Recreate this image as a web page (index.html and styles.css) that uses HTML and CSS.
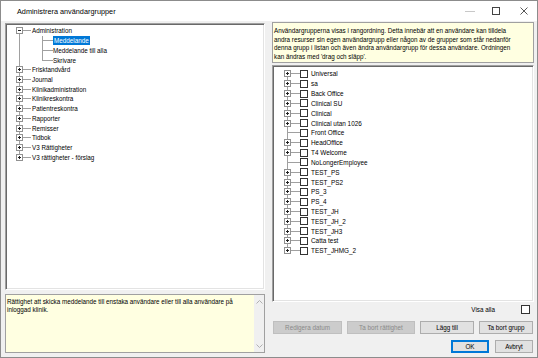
FILE: index.html
```html
<!DOCTYPE html>
<html lang="sv">
<head>
  <meta charset="UTF-8">
  <title>Administrera användargrupper</title>
  <link rel="stylesheet" href="styles.css">
</head>
<body>

  <div class="window">

    <div class="titlebar">
      <span class="title">Administrera användargrupper</span>
      <div class="controls">
        <svg width="10" height="10" viewBox="0 0 10 10"><path d="M0 5.5h10" stroke="#c8c8c8" stroke-width="1"/></svg>
        <svg width="8" height="8" viewBox="0 0 8 8"><rect x="0.5" y="0.5" width="7" height="7" fill="none" stroke="#444"/></svg>
        <svg width="8" height="8" viewBox="0 0 8 8"><path d="M0.5 0.5l7 7M7.5 0.5l-7 7" stroke="#444" stroke-width="0.9"/></svg>
      </div>
    </div>

    <div class="main">

      <div class="col">
        <div class="tree sunken">
          <div class="row first"><span class="gut"><span class="exp minus"></span></span>Administration</div>
          <div class="row kid"><span class="gut"></span><span class="sel">Meddelande</span></div>
          <div class="row kid"><span class="gut"></span>Meddelande till alla</div>
          <div class="row kid lastkid"><span class="gut"></span>Skrivare</div>
          <div class="row"><span class="gut"><span class="exp"></span></span>Frisktandvård</div>
          <div class="row"><span class="gut"><span class="exp"></span></span>Journal</div>
          <div class="row"><span class="gut"><span class="exp"></span></span>Klinikadministration</div>
          <div class="row"><span class="gut"><span class="exp"></span></span>Klinikreskontra</div>
          <div class="row"><span class="gut"><span class="exp"></span></span>Patientreskontra</div>
          <div class="row"><span class="gut"><span class="exp"></span></span>Rapporter</div>
          <div class="row"><span class="gut"><span class="exp"></span></span>Remisser</div>
          <div class="row"><span class="gut"><span class="exp"></span></span>Tidbok</div>
          <div class="row"><span class="gut"><span class="exp"></span></span>V3 Rättigheter</div>
          <div class="row last"><span class="gut"><span class="exp"></span></span>V3 rättigheter - förslag</div>
        </div>

        <div class="desc">
          <div class="desc-text">Rättighet att skicka meddelande till enstaka användare eller till alla användare på<br>inloggad klinik.</div>
          <div class="scroll">
            <svg width="7" height="4" viewBox="0 0 7 4"><path d="M0.5 3.5l3-3 3 3" fill="none" stroke="#b0b0b0"/></svg>
            <svg width="7" height="4" viewBox="0 0 7 4"><path d="M0.5 0.5l3 3 3-3" fill="none" stroke="#b0b0b0"/></svg>
          </div>
        </div>
      </div>

      <div class="col">
        <div class="info">Användargrupperna visas i rangordning. Detta innebär att en användare kan tilldela<br>andra resurser sin egen användargrupp eller någon av de grupper som står nedanför<br>denna grupp i listan och även ändra användargrupp för dessa användare. Ordningen<br>kan ändras med 'drag och släpp'.</div>

        <div class="tree groups sunken">
          <div class="row first"><span class="gut"><span class="exp"></span></span><span class="chk"></span>Universal</div>
          <div class="row"><span class="gut"><span class="exp"></span></span><span class="chk"></span>sa</div>
          <div class="row"><span class="gut"><span class="exp"></span></span><span class="chk"></span>Back Office</div>
          <div class="row"><span class="gut"><span class="exp"></span></span><span class="chk"></span>Clinical SU</div>
          <div class="row"><span class="gut"><span class="exp"></span></span><span class="chk"></span>Clinical</div>
          <div class="row"><span class="gut"><span class="exp"></span></span><span class="chk"></span>Clinical utan 1026</div>
          <div class="row"><span class="gut"></span><span class="chk"></span>Front Office</div>
          <div class="row"><span class="gut"><span class="exp"></span></span><span class="chk"></span>HeadOffice</div>
          <div class="row"><span class="gut"><span class="exp"></span></span><span class="chk"></span>T4 Welcome</div>
          <div class="row"><span class="gut"></span><span class="chk"></span>NoLongerEmployee</div>
          <div class="row"><span class="gut"><span class="exp"></span></span><span class="chk"></span>TEST_PS</div>
          <div class="row"><span class="gut"><span class="exp"></span></span><span class="chk"></span>TEST_PS2</div>
          <div class="row"><span class="gut"><span class="exp"></span></span><span class="chk"></span>PS_3</div>
          <div class="row"><span class="gut"><span class="exp"></span></span><span class="chk"></span>PS_4</div>
          <div class="row"><span class="gut"><span class="exp"></span></span><span class="chk"></span>TEST_JH</div>
          <div class="row"><span class="gut"><span class="exp"></span></span><span class="chk"></span>TEST_JH_2</div>
          <div class="row"><span class="gut"><span class="exp"></span></span><span class="chk"></span>TEST_JH3</div>
          <div class="row"><span class="gut"><span class="exp"></span></span><span class="chk"></span>Catta test</div>
          <div class="row last"><span class="gut"><span class="exp"></span></span><span class="chk"></span>TEST_JHMG_2</div>
        </div>

        <div class="visa">
          <span>Visa alla</span>
          <span class="box"></span>
        </div>

        <div class="btnrow">
          <button class="btn w1" disabled>Redigera datum</button>
          <button class="btn w2" disabled>Ta bort rättighet</button>
          <button class="btn w3">Lägg till</button>
          <button class="btn w4">Ta bort grupp</button>
        </div>

        <div class="okrow">
          <button class="btn ok">OK</button>
          <button class="btn">Avbryt</button>
        </div>
      </div>

    </div>
  </div>

</body>
</html>
```

FILE: styles.css
```css
html, body {
  margin: 0;
  padding: 0;
}

body {
  font-family: 'Liberation Sans', Arial, sans-serif;
  font-size: 6.3px;
  color: #000;
  background-color: #fff;
}

.window {
  width: 538px;
  height: 358px;
  box-sizing: border-box;
  border: 1px solid #8c8c8c;
  display: flex;
  flex-direction: column;
}

/* title bar */
.titlebar {
  height: 20px;
  flex: none;
  background-color: #fff;
  display: flex;
  align-items: center;
  justify-content: space-between;
}

.title {
  font-size: 7.3px;
  padding-left: 16px;
}

.controls {
  display: flex;
  align-items: center;
  gap: 14px;
  padding-right: 9px;
}

.controls svg {
  display: block;
}

.controls svg:first-child {
  margin-right: 3px;
}

.controls svg:last-child {
  margin-left: 6px;
}

/* body of the dialog */
.main {
  flex: 1;
  background-color: #f0f0f0;
  display: grid;
  grid-template-columns: 260px 262px;
  column-gap: 7px;
  padding: 1px 3px 4px 4px;
  min-height: 0;
}

.col {
  display: flex;
  flex-direction: column;
  min-height: 0;
}

.sunken {
  background-color: #fff;
  border-top: 1px solid #a0a0a0;
  border-left: 1px solid #a0a0a0;
  border-right: 1px solid #fff;
  border-bottom: 1px solid #fff;
  box-shadow: inset 1px 1px 0 #696969, inset -1px -1px 0 #e3e3e3;
}

/* tree views */
.tree {
  flex: 1;
  box-sizing: border-box;
  padding: 2px 0 0 2px;
}

.col:first-child .tree {
  margin-top: 1px;
}

.row {
  display: flex;
  align-items: center;
  height: 9.72px;
  white-space: nowrap;
  line-height: 9px;
}

.gut {
  flex: none;
  align-self: stretch;
  width: 24px;
  display: flex;
  align-items: center;
  background:
    linear-gradient(#a0a0a0, #a0a0a0) 11px 0 / 1px 100% no-repeat,
    linear-gradient(#a0a0a0, #a0a0a0) 11px 50% / 12px 1px no-repeat;
}

.row.first .gut {
  background:
    linear-gradient(#a0a0a0, #a0a0a0) 11px 100% / 1px 50% no-repeat,
    linear-gradient(#a0a0a0, #a0a0a0) 11px 50% / 12px 1px no-repeat;
}

.row.last .gut {
  background:
    linear-gradient(#a0a0a0, #a0a0a0) 11px 0 / 1px 50% no-repeat,
    linear-gradient(#a0a0a0, #a0a0a0) 11px 50% / 12px 1px no-repeat;
}

.row.kid .gut {
  width: 45px;
  background:
    linear-gradient(#a0a0a0, #a0a0a0) 11px 0 / 1px 100% no-repeat,
    linear-gradient(#a0a0a0, #a0a0a0) 34px 0 / 1px 100% no-repeat,
    linear-gradient(#a0a0a0, #a0a0a0) 34px 50% / 11px 1px no-repeat;
}

.row.kid.lastkid .gut {
  background:
    linear-gradient(#a0a0a0, #a0a0a0) 11px 0 / 1px 100% no-repeat,
    linear-gradient(#a0a0a0, #a0a0a0) 34px 0 / 1px 50% no-repeat,
    linear-gradient(#a0a0a0, #a0a0a0) 34px 50% / 11px 1px no-repeat;
}

.exp {
  width: 7px;
  height: 7px;
  box-sizing: border-box;
  margin-left: 8px;
  border: 1px solid #919191;
  background:
    linear-gradient(#222, #222) center / 3px 1px no-repeat,
    linear-gradient(#222, #222) center / 1px 3px no-repeat,
    #fff;
}

.exp.minus {
  background:
    linear-gradient(#222, #222) center / 3px 1px no-repeat,
    #fff;
}

.sel {
  background-color: #0078d7;
  color: #fff;
  padding: 0 1px;
  margin-left: 0;
}

.row.kid .sel {
  margin-left: 0;
}

/* group tree on the right */
.groups {
  margin-top: 2px;
  padding: 3px 0 0 2px;
}

.groups .row {
  height: 9.83px;
  font-size: 6.4px;
}

.groups .gut {
  width: 25px;
}

.groups .exp {
  margin-left: 9px;
}

.groups .gut {
  background:
    linear-gradient(#a0a0a0, #a0a0a0) 12px 0 / 1px 100% no-repeat,
    linear-gradient(#a0a0a0, #a0a0a0) 12px 50% / 13px 1px no-repeat;
}

.groups .row.first .gut {
  background:
    linear-gradient(#a0a0a0, #a0a0a0) 12px 100% / 1px 50% no-repeat,
    linear-gradient(#a0a0a0, #a0a0a0) 12px 50% / 13px 1px no-repeat;
}

.groups .row.last .gut {
  background:
    linear-gradient(#a0a0a0, #a0a0a0) 12px 0 / 1px 50% no-repeat,
    linear-gradient(#a0a0a0, #a0a0a0) 12px 50% / 13px 1px no-repeat;
}

.chk {
  flex: none;
  width: 8px;
  height: 8px;
  box-sizing: border-box;
  border: 1px solid #333;
  background-color: #fff;
  margin-right: 3px;
}

/* yellow help boxes */
.info {
  flex: none;
  height: 41px;
  box-sizing: border-box;
  background-color: #ffffe1;
  border: 1px solid #a0a0a0;
  padding: 4px 2px 0 1px;
  line-height: 8.7px;
  white-space: nowrap;
  overflow: hidden;
}

.desc {
  flex: none;
  height: 59px;
  margin-top: 4px;
  box-sizing: border-box;
  border: 1px solid #a0a0a0;
  background-color: #ffffe1;
  display: flex;
}

.desc-text {
  flex: 1;
  padding: 3px 1px 0 1px;
  line-height: 8px;
  white-space: nowrap;
  overflow: hidden;
}

.scroll {
  flex: none;
  width: 10px;
  background-color: #f0f0f0;
  display: flex;
  flex-direction: column;
  justify-content: space-between;
  align-items: center;
  padding: 5px 0 4px 0;
}

.scroll svg {
  display: block;
}

/* bottom controls */
.visa {
  flex: none;
  height: 15px;
  display: flex;
  justify-content: flex-end;
  align-items: center;
  gap: 26px;
  padding-right: 4px;
}

.visa .box {
  width: 9px;
  height: 9px;
  box-sizing: border-box;
  border: 1px solid #333;
  background-color: #fff;
}

.btn {
  font-family: 'Liberation Sans', Arial, sans-serif;
  font-size: 6.3px;
  height: 13px;
  box-sizing: border-box;
  padding: 0;
  background-color: #e1e1e1;
  border: 1px solid #adadad;
  color: #000;
}

.btn:disabled {
  background-color: #cccccc;
  border-color: #bfbfbf;
  color: #8a8a8a;
}

.btnrow {
  flex: none;
  display: flex;
  gap: 5px;
  margin-top: 4px;
  padding-left: 1px;
}

.w1 { width: 69px; }
.w2 { width: 68px; }
.w3 { width: 54px; }
.w4 { width: 54px; }

.okrow {
  flex: none;
  display: flex;
  justify-content: flex-end;
  gap: 6px;
  margin-top: 6px;
  padding-right: 1px;
}

.okrow .btn {
  width: 38px;
}

.btn.ok {
  border-color: #0078d7;
  box-shadow: inset 0 0 0 1px #0078d7;
}
```
